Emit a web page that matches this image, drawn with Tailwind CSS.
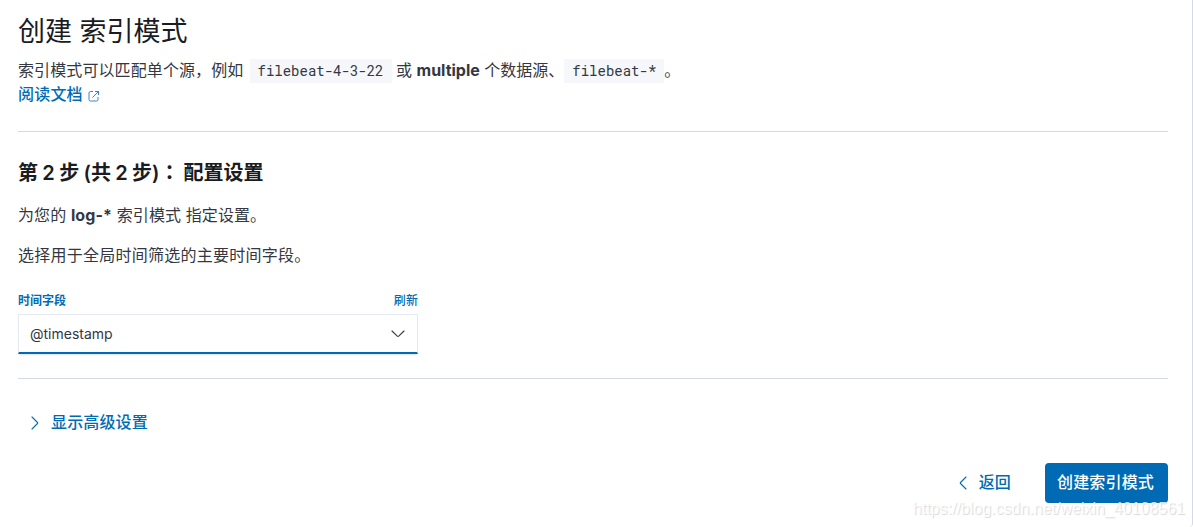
<!DOCTYPE html>
<html lang="zh-CN">

<head>
  <meta charset="UTF-8" />
  <meta name="viewport" content="width=device-width, initial-scale=1" />
  <script src="https://cdn.jsdelivr.net/npm/@tailwindcss/browser@4"></script>
  <title>创建 索引模式</title>
</head>

<body class="h-[527px] overflow-hidden bg-white font-['Inter','Noto_Sans_CJK_SC',sans-serif] text-[#343741]">
  <main class="relative h-[527px] border-r border-[#d3dae6] rounded-br-sm pl-[18px] pr-6 pt-3">
    <h1 class="text-[27px] leading-10 font-normal text-[#1a1c21] whitespace-nowrap">创建 索引模式</h1>

    <p class="mt-1.5 text-base leading-6 whitespace-nowrap flex">
      <span class="whitespace-pre tracking-[0.1px]">索引模式可以匹配单个源，例如 </span>
      <code class="ml-[1.5px] mt-px w-[142px] bg-[#f5f7fa] text-center text-sm leading-6 font-['Roboto_Mono','DejaVu_Sans_Mono',monospace]">filebeat-4-3-22</code>
      <span class="whitespace-pre"> 或 <b class="font-bold">multiple</b> 个数据源、</span>
      <code class="mt-px w-[100px] bg-[#f5f7fa] text-center text-sm leading-6 font-['Roboto_Mono','DejaVu_Sans_Mono',monospace]">filebeat-*</code>
      <span>。</span>
    </p>
    <a href="#" class="-mt-px flex w-max items-center text-base leading-6 font-medium tracking-[0.2px] text-[#006bb4]">阅读文档
      <svg class="ml-[5px] mt-[3px] size-3" viewBox="0 0 12 12" fill="none" stroke="currentColor" stroke-width=".8">
        <path d="M5 1.5H2.5a1.5 1.5 0 0 0-1.5 1.5v6.500a1.500 1.500 0 0 0 1.500 1.500h6a1.500 1.500 0 0 0 1.500-1.500V7M7 1.500h3.500V5M10.500 1.500 4.500 7.500" />
      </svg>
    </a>

    <hr class="mt-[25px] border-[#d3dae6]" />

    <h2 class="mt-6 text-xl leading-8 font-semibold text-[#1a1c21] whitespace-pre [word-spacing:-0.7px]">第 2 步 (共 2 步)<span class="font-['Noto_Sans_CJK_TC'] -mr-[0.5px]" lang="zh-TW">：</span> 配置设置</h2>
    <p class="mt-3.5 text-base leading-6 tracking-[0.1px]">为您的 <b class="font-bold">log-*</b> 索引模式 指定设置。</p>
    <p class="mt-4 text-base leading-6 tracking-[0.25px]">选择用于全局时间筛选的主要时间字段。</p>

    <div class="mt-[25px] w-[400px]">
      <div class="flex justify-between text-xs leading-[18px] text-[#006bb4]">
        <label for="timeField" class="font-semibold">时间字段</label>
        <a href="#" class="font-medium tracking-[0.1px]">刷新</a>
      </div>
      <div id="timeField" class="mt-1 flex h-10 items-center justify-between border border-b-2 border-[#e4e9f2] border-b-[#006bb4] pl-[11px] pr-3 text-sm shadow-[0_2px_2px_-1px_rgba(152,162,179,0.3)]">
        <span>@timestamp</span>
        <svg class="h-2 w-[14px]" viewBox="0 0 14 8" fill="none" stroke="currentColor" stroke-width="1.100" stroke-linecap="round" stroke-linejoin="round">
          <path d="M1 1l5.300 5.200q.7.600 1.400 0L13 1" />
        </svg>
      </div>
    </div>

    <hr class="mt-6 border-[#d3dae6]" />

    <button class="mt-6 flex h-10 items-center pl-[13px] text-base font-medium tracking-[0.15px] text-[#006bb4]">
      <svg class="mr-3 h-[14px] w-2" viewBox="0 0 8 14" fill="none" stroke="currentColor" stroke-width="1.100" stroke-linecap="round" stroke-linejoin="round">
        <path d="M1 1l5.500 5.500q.5.500 0 1L1 13" />
      </svg>
      <span class="-mt-0.5">显示高级设置</span>
    </button>

    <div class="mt-5 flex h-10 items-center justify-end text-base font-medium tracking-[0.15px]">
      <button class="mr-[34px] flex items-center text-[#006bb4]">
        <svg class="mr-3 h-[14px] w-2" viewBox="0 0 8 14" fill="none" stroke="currentColor" stroke-width="1.100" stroke-linecap="round" stroke-linejoin="round">
          <path d="M7 1 1.500 6.500q-.5.500 0 1L7 13" />
        </svg>
        <span class="-mt-0.5">返回</span>
      </button>
      <button class="h-10 w-[123px] rounded bg-[#006bb4] pr-2 pl-1.5 pb-0.5 text-white">创建索引模式</button>
    </div>

    <!-- watermark -->
    <span class="absolute right-[7px] bottom-[6px] text-base leading-6 whitespace-nowrap text-white/80 font-['Liberation_Sans',sans-serif] [text-shadow:1px_1px_1px_rgba(0,0,0,0.16)]">https://blog.csdn.net/weixin_40108561</span>
  </main>
</body>

</html>
